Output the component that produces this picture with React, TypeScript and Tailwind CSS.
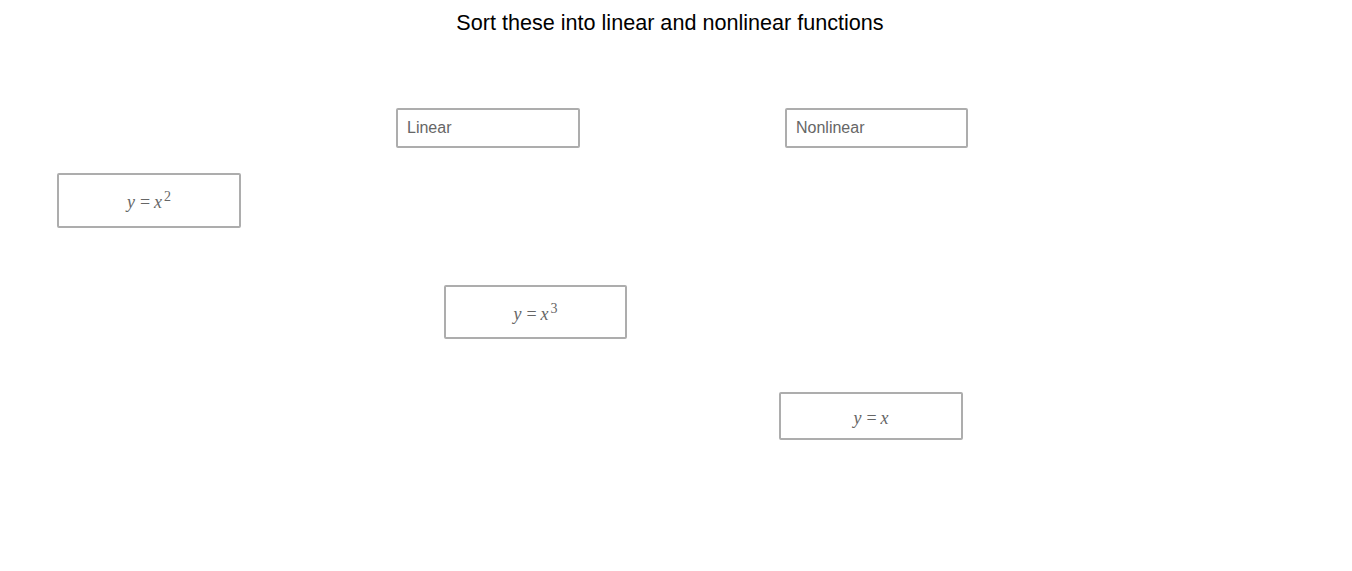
import React from "react";

function Eq({ sup }: { sup?: string }) {
  return (
    <span className="font-['Liberation_Serif',serif] text-[18px] text-[#666] leading-none pt-[3px]">
      <i>y</i>
      <span className="ml-[5px] mr-[4px]">=</span>
      <i>x</i>
      {sup && <span className="text-[14px] relative -top-[7px] ml-[2px]">{sup}</span>}
    </span>
  );
}

const card = "absolute border-2 border-[#adadad] rounded-[2px] flex items-center justify-center bg-white";

export default function App() {
  return (
    <div className="relative w-[1352px] h-[571px] bg-white font-['Liberation_Sans',Arial,sans-serif]">
      <h1 className="pt-[9px] pr-[12px] text-center text-[21.6px] text-black leading-[28px]">
        Sort these into linear and nonlinear functions
      </h1>

      <div className="flex gap-[205px] pl-[396px] pt-[71px]">
        {["Linear", "Nonlinear"].map((l) => (
          <div
            key={l}
            className="w-[184px] last:w-[183px] h-[40px] border-2 border-[#adadad] rounded-[2px] flex items-center px-[9px] text-[16px] text-[#666]"
          >
            {l}
          </div>
        ))}
      </div>

      {/* draggable cards on the canvas */}
      <div className={`${card} left-[57px] top-[173px] w-[184px] h-[55px]`}>
        <Eq sup="2" />
      </div>
      <div className={`${card} left-[444px] top-[285px] w-[183px] h-[54px]`}>
        <Eq sup="3" />
      </div>
      <div className={`${card} left-[779px] top-[392px] w-[184px] h-[48px]`}>
        <Eq />
      </div>
    </div>
  );
}
